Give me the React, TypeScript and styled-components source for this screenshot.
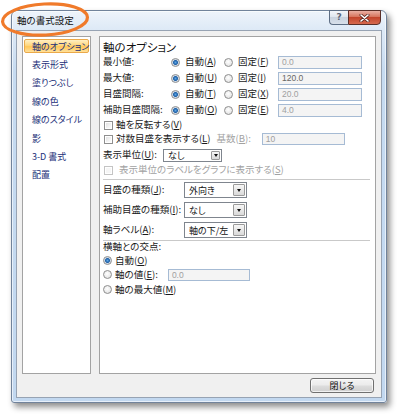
import React from "react";
import styled, { createGlobalStyle } from "styled-components";

const Global = createGlobalStyle`
  html, body { margin: 0; padding: 0; background: #ffffff; }
  body {
    font-family: "Noto Sans CJK JP", "Noto Sans", sans-serif;
    font-feature-settings: "palt";
    color: #000;
  }
  * { box-sizing: border-box; }
`;

const Page = styled.div`
  position: relative;
  width: 400px;
  height: 418px;
  padding: 10px 0 0 11px;
`;

const Annotation = styled.svg`
  position: absolute;
  left: 0;
  top: 0;
  pointer-events: none;
`;

const Window = styled.div`
  width: 376px;
  height: 393px;
  display: flex;
  flex-direction: column;
  border: 1px solid #71839b;
  border-radius: 6px 6px 3px 3px;
  background: linear-gradient(to bottom, #eef4fb 0px, #dde9f6 19px, #c6dbf1 60px, #c2d8f0 100%);
  box-shadow: 3px 4px 6px rgba(0, 0, 0, 0.45), inset 0 0 0 1px rgba(255, 255, 255, 0.6);
`;

const TitleBar = styled.div`
  height: 19px;
  flex: none;
  display: flex;
  align-items: flex-start;
  padding: 0 5px 0 5px;
`;

const TitleText = styled.span`
  font-size: 9.5px;
  line-height: 19px;
  color: #111;
`;

const CaptionGroup = styled.div`
  margin-left: auto;
  margin-top: -1px;
  display: flex;
`;

const HelpButton = styled.div`
  width: 19px;
  height: 15px;
  border: 1px solid #5d6e84;
  border-right: none;
  border-radius: 0 0 0 4px;
  background: linear-gradient(to bottom, #f3f6fa 0%, #dfe6ee 45%, #c9d3df 50%, #d8e0ea 100%);
  display: flex;
  align-items: center;
  justify-content: center;
  font-family: "DejaVu Sans", sans-serif;
  font-size: 9px;
  font-weight: bold;
  color: #5a6576;
  line-height: 1;
`;

const CloseButton = styled.div`
  width: 33px;
  height: 15px;
  border: 1px solid #5a2f28;
  border-radius: 0 0 4px 0;
  background: linear-gradient(to bottom, #eab0a3 0%, #d7745d 45%, #c3452c 50%, #d66a4f 100%);
  display: flex;
  align-items: center;
  justify-content: center;
`;

const Client = styled.div`
  flex: 1;
  display: flex;
  flex-direction: column;
  gap: 4px;
  margin: 0 4px 4px 4px;
  padding: 5px 5px 4px 5px;
  border: 1px solid #97a3b3;
  background: #f0f0f0;
`;

const Panels = styled.div`
  height: 338px;
  display: flex;
  gap: 8px;
`;

const Sidebar = styled.ul`
  width: 69px;
  margin: 0;
  padding: 0 1px;
  list-style: none;
  border: 1px solid #a3a3a3;
  background: #fff;
`;

const NavItem = styled.li<{ $active?: boolean }>`
  height: ${(p) => (p.$active ? "14.4px" : "18.4px")};
  margin: ${(p) => (p.$active ? "2px 0" : "0")};
  display: flex;
  align-items: center;
  padding-left: ${(p) => (p.$active ? "7px" : "8px")};
  font-size: 9px;
  line-height: 1;
  color: #1b2f78;
  white-space: nowrap;
  border: ${(p) => (p.$active ? "1px solid #eba94a" : "none")};
  border-radius: 2px;
  background: ${(p) =>
    p.$active
      ? "linear-gradient(to bottom, #fff0c4 0%, #ffd77e 45%, #ffc85a 55%, #ffe09a 100%)"
      : "transparent"};
`;

const Main = styled.div`
  width: 277px;
  display: flex;
  flex-direction: column;
  padding: 3px 5px 0 3px;
  border: 1px solid #a3a3a3;
  background: #fff;
`;

const Heading = styled.div`
  height: 14px;
  font-size: 11.5px;
  line-height: 14px;
  color: #111;
`;

const OptionGrid = styled.div`
  display: grid;
  grid-template-columns: 68px 53px 54px 84px;
  grid-auto-rows: 16px;
  align-items: center;
`;

const Label = styled.span<{ $disabled?: boolean }>`
  font-size: 9.5px;
  line-height: 1;
  white-space: nowrap;
  color: ${(p) => (p.$disabled ? "#a2a2a2" : "#1a1a1a")};
`;

const Key = styled.span`
  text-decoration: underline;
`;

const RadioOption = styled.label<{ $gap: number; $h?: number }>`
  display: flex;
  align-items: center;
  gap: ${(p) => p.$gap}px;
  height: ${(p) => (p.$h ? `${p.$h}px` : "auto")};
`;

const Radio = styled.span<{ $checked?: boolean }>`
  width: 9px;
  height: 9px;
  flex: none;
  border-radius: 50%;
  border: 1px solid #8e8e8e;
  background: ${(p) =>
    p.$checked
      ? "radial-gradient(circle at 50% 50%, #5aa5e6 0px, #1f5fa5 2.1px, #c9d6e4 2.7px, #f4f6f8 100%)"
      : "radial-gradient(circle at 45% 40%, #ffffff 0%, #e6e6e6 70%, #d2d2d2 100%)"};
`;

const Field = styled.div<{ $w: number; $h: number; $dark?: boolean }>`
  width: ${(p) => p.$w}px;
  height: ${(p) => p.$h}px;
  display: flex;
  align-items: center;
  padding-left: 3px;
  border: 1px solid #a6bbd4;
  background: #f4f4f4;
  font-family: "Liberation Sans", sans-serif;
  font-size: 8.5px;
  color: ${(p) => (p.$dark ? "#666" : "#a0a0a0")};
`;

const CheckRow = styled.div<{ $h: number; $gap: number }>`
  height: ${(p) => p.$h}px;
  display: flex;
  align-items: center;
  gap: ${(p) => p.$gap}px;
  padding-left: 1px;
`;

const Checkbox = styled.span<{ $disabled?: boolean }>`
  width: 9px;
  height: 9px;
  flex: none;
  border: 1px solid ${(p) => (p.$disabled ? "#c4c4c4" : "#8f8f8f")};
  background: ${(p) =>
    p.$disabled ? "#f6f6f6" : "linear-gradient(135deg, #dcdcdc 0%, #f4f4f4 60%, #ffffff 100%)"};
  box-shadow: inset 0 0 0 1px #fff;
`;

const Aside = styled.div`
  display: flex;
  align-items: center;
  margin-left: 3px;
  gap: 11px;
`;

const UnitRow = styled.div`
  height: 18px;
  display: grid;
  grid-template-columns: 60px 59px;
  align-items: center;
`;

const SelectRow = styled.div`
  height: 20px;
  display: grid;
  grid-template-columns: 81px 63px;
  align-items: center;
`;

const Select = styled.div<{ $w: number; $h: number }>`
  width: ${(p) => p.$w}px;
  height: ${(p) => p.$h}px;
  display: flex;
  border: 1px solid #7f858e;
  background: #fff;
`;

const SelectValue = styled.span`
  flex: 1;
  display: flex;
  align-items: center;
  padding-left: 4px;
  font-size: 9px;
  line-height: 1;
  white-space: nowrap;
  color: #111;
`;

const DropButton = styled.span<{ $w: number }>`
  width: ${(p) => p.$w}px;
  margin: 1px;
  display: flex;
  align-items: center;
  justify-content: center;
  border: 1px solid #9a9a9a;
  border-radius: 1px;
  background: linear-gradient(to bottom, #f7f7f7 0%, #e8e8e8 50%, #d9d9d9 100%);
`;

const Arrow = styled.span`
  width: 0;
  height: 0;
  border-left: 2.5px solid transparent;
  border-right: 2.5px solid transparent;
  border-top: 3px solid #111;
`;

const Separator = styled.div<{ $mt: number }>`
  height: 1px;
  margin-top: ${(p) => p.$mt}px;
  background: #c9c9c9;
  flex: none;
`;

const GroupLabel = styled.div`
  height: 12px;
  display: flex;
  align-items: center;
`;

const InlineField = styled.div`
  display: flex;
  align-items: center;
  gap: 10px;
`;

const Footer = styled.div`
  display: flex;
  justify-content: flex-end;
  padding-right: 2px;
`;

const PushButton = styled.button`
  width: 64px;
  height: 15px;
  padding: 0;
  border: 1px solid #707070;
  border-radius: 3px;
  background: linear-gradient(to bottom, #f4f4f4 0%, #ebebeb 48%, #dddddd 52%, #cfcfcf 100%);
  box-shadow: inset 0 0 0 1px rgba(255, 255, 255, 0.7);
  font-family: "Noto Sans CJK JP", sans-serif;
  font-feature-settings: "palt";
  font-size: 9px;
  line-height: 1;
  color: #111;
`;

const navItems = ["軸のオプション", "表示形式", "塗りつぶし", "線の色", "線のスタイル", "影", "3-D 書式", "配置"];

const optionRows = [
  { label: "最小値:", a: "A", f: "F", value: "0.0" },
  { label: "最大値:", a: "U", f: "I", value: "120.0", dark: true },
  { label: "目盛間隔:", a: "T", f: "X", value: "20.0" },
  { label: "補助目盛間隔:", a: "O", f: "E", value: "4.0" },
];

const selectRows = [
  { label: "目盛の種類", k: "J", value: "外向き" },
  { label: "補助目盛の種類", k: "I", value: "なし" },
  { label: "軸ラベル", k: "A", value: "軸の下/左" },
];

const Accel = ({ text, k, after = "" }: { text: string; k: string; after?: string }) => (
  <>
    {text}(<Key>{k}</Key>){after}
  </>
);

const SelectBox = ({ w, h, value }: { w: number; h: number; value: string }) => (
  <Select $w={w} $h={h}>
    <SelectValue>{value}</SelectValue>
    <DropButton $w={h - 4}>
      <Arrow />
    </DropButton>
  </Select>
);

export default function App() {
  return (
    <Page>
      <Global />
      <Window>
        <TitleBar>
          <TitleText>軸の書式設定</TitleText>
          <CaptionGroup>
            <HelpButton>?</HelpButton>
            <CloseButton>
              <svg width="11" height="8" viewBox="0 0 11 8">
                <path d="M2 1 L9 7 M9 1 L2 7" stroke="#5a2a22" strokeWidth="3" strokeLinecap="round" />
                <path d="M2 1 L9 7 M9 1 L2 7" stroke="#ffffff" strokeWidth="1.6" strokeLinecap="round" />
              </svg>
            </CloseButton>
          </CaptionGroup>
        </TitleBar>
        <Client>
          <Panels>
            <Sidebar>
              {navItems.map((n, i) => (
                <NavItem key={n} $active={i === 0}>
                  {n}
                </NavItem>
              ))}
            </Sidebar>
            <Main>
              <Heading>軸のオプション</Heading>
              <OptionGrid>
                {optionRows.map((r) => (
                  <React.Fragment key={r.label}>
                    <Label>{r.label}</Label>
                    <RadioOption $gap={5}>
                      <Radio $checked />
                      <Label>
                        <Accel text="自動" k={r.a} />
                      </Label>
                    </RadioOption>
                    <RadioOption $gap={5}>
                      <Radio />
                      <Label>
                        <Accel text="固定" k={r.f} />
                      </Label>
                    </RadioOption>
                    <Field $w={84} $h={13} $dark={r.dark}>
                      {r.value}
                    </Field>
                  </React.Fragment>
                ))}
              </OptionGrid>
              <CheckRow $h={14} $gap={3}>
                <Checkbox />
                <Label>
                  <Accel text="軸を反転する" k="V" />
                </Label>
              </CheckRow>
              <CheckRow $h={14} $gap={3}>
                <Checkbox />
                <Label>
                  <Accel text="対数目盛を表示する" k="L" />
                </Label>
                <Aside>
                  <Label $disabled>
                    <Accel text="基数" k="B" after=":" />
                  </Label>
                  <Field $w={83} $h={12}>
                    10
                  </Field>
                </Aside>
              </CheckRow>
              <UnitRow>
                <Label>
                  <Accel text="表示単位" k="U" after=":" />
                </Label>
                <SelectBox w={59} h={13} value="なし" />
              </UnitRow>
              <CheckRow $h={12} $gap={6}>
                <Checkbox $disabled />
                <Label $disabled>
                  <Accel text="表示単位のラベルをグラフに表示する" k="S" />
                </Label>
              </CheckRow>
              <Separator $mt={3} />
              {selectRows.map((r) => (
                <SelectRow key={r.label}>
                  <Label>
                    <Accel text={r.label} k={r.k} after=":" />
                  </Label>
                  <SelectBox w={63} h={16} value={r.value} />
                </SelectRow>
              ))}
              <Separator $mt={0} />
              <GroupLabel>
                <Label>横軸との交点:</Label>
              </GroupLabel>
              <RadioOption $gap={3} $h={14.5}>
                <Radio $checked />
                <Label>
                  <Accel text="自動" k="O" />
                </Label>
              </RadioOption>
              <RadioOption $gap={3} $h={14.5}>
                <Radio />
                <InlineField>
                  <Label>
                    <Accel text="軸の値" k="E" after=":" />
                  </Label>
                  <Field $w={82} $h={12}>
                    0.0
                  </Field>
                </InlineField>
              </RadioOption>
              <RadioOption $gap={3} $h={14.5}>
                <Radio />
                <Label>
                  <Accel text="軸の最大値" k="M" />
                </Label>
              </RadioOption>
            </Main>
          </Panels>
          <Footer>
            <PushButton>閉じる</PushButton>
          </Footer>
        </Client>
      </Window>
      <Annotation width="100" height="42" viewBox="0 0 100 42">
        <ellipse
          cx="45"
          cy="19.5"
          rx="42.5"
          ry="15.5"
          fill="none"
          stroke="#f07a2a"
          strokeWidth="3.2"
          transform="rotate(-3 45 19.5)"
        />
      </Annotation>
    </Page>
  );
}
